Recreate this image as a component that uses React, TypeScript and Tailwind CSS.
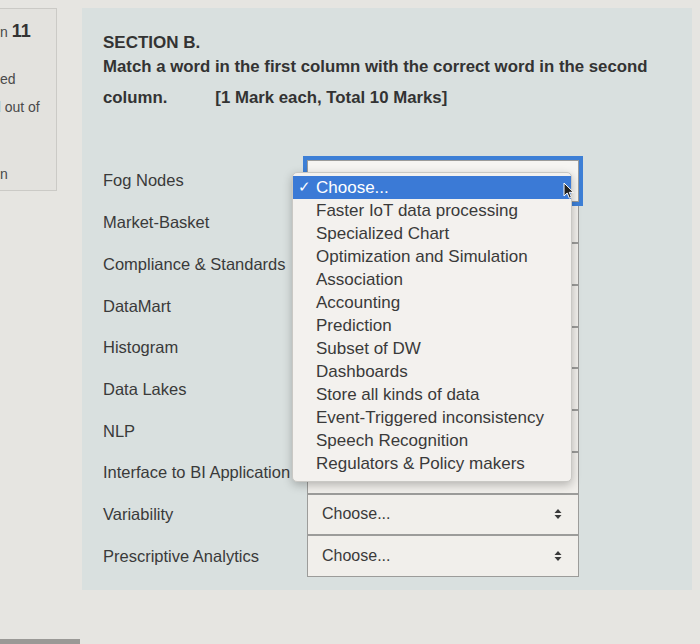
import React from 'react';

const rows = [
  'Fog Nodes',
  'Market-Basket',
  'Compliance & Standards',
  'DataMart',
  'Histogram',
  'Data Lakes',
  'NLP',
  'Interface to BI Application',
  'Variability',
  'Prescriptive Analytics',
];

const options = [
  'Faster IoT data processing',
  'Specialized Chart',
  'Optimization and Simulation',
  'Association',
  'Accounting',
  'Prediction',
  'Subset of DW',
  'Dashboards',
  'Store all kinds of data',
  'Event-Triggered inconsistency',
  'Speech Recognition',
  'Regulators & Policy makers',
];

const SelectArrows: React.FC = () => (
  <svg width="8" height="12" viewBox="0 0 8 12" className="text-[#3a3a3a]">
    <path d="M4 1 L7.5 5 H0.5 Z" fill="currentColor" />
    <path d="M4 11 L7.5 7 H0.5 Z" fill="currentColor" />
  </svg>
);

const App: React.FC = () => {
  return (
    <div className="relative w-[700px] h-[644px] overflow-hidden bg-[#e6e5e1] font-['Liberation_Sans',Arial,sans-serif] text-[#3a3a3a]">
      <div className="flex pt-2">
        {/* Question info block, cut off on the left */}
        <div className="w-[57px] h-[183px] shrink-0 border border-l-0 border-[#cbcac6] bg-[#e3e2de] overflow-hidden text-[14px] text-[#4a4a4a]">
          <div className="flex items-baseline mt-[9px] whitespace-nowrap">
            <span>n</span>
            <span className="ml-[4px] text-[18px] font-bold text-[#333]">11</span>
          </div>
          <p className="mt-[26px] leading-[16px]">ed</p>
          <p className="mt-[12px] leading-[16px] -ml-[7px] whitespace-nowrap">d out of</p>
          <p className="mt-[51px] leading-[16px]">n</p>
        </div>

        {/* Question text panel */}
        <div className="ml-[25px] w-[610px] h-[582px] shrink-0 bg-[#d9e0df] pl-[21px] pt-[27px]">
          <h3 className="text-[17px] leading-[16px] font-bold text-[#333]">SECTION B.</h3>
          <p className="text-[16.8px] leading-[31px] font-bold text-[#333] whitespace-nowrap">
            Match a word in the first column with the correct word in the second
            <br />
            column.<span className="ml-[48px]">[1 Mark each, Total 10 Marks]</span>
          </p>

          <div className="mt-[47px] flex flex-col">
            {rows.map((label, i) => (
              <div key={label} className="flex items-center h-[41.7px]">
                <span className="w-[204px] shrink-0 text-[16.5px] whitespace-nowrap">{label}</span>
                <div
                  className={`w-[272px] h-full flex items-center justify-between pl-[14px] pr-[16px] border border-[#9c9c9a] bg-[#f1efeb] text-[16px] ${
                    i === 0 ? 'ring-4 ring-[#3d7fd6] relative z-10 bg-[#f6f5f2]' : ''
                  }`}
                >
                  <span>Choose...</span>
                  <SelectArrows />
                </div>
              </div>
            ))}
          </div>
        </div>
      </div>

      {/* Open dropdown list */}
      <div className="absolute left-[292px] top-[172px] w-[280px] h-[310px] z-20 rounded-[5px] border border-[#c9c8c4] bg-[#f3f1ee] pt-[3px] shadow-[0_3px_10px_rgba(0,0,0,0.25)] text-[17px] text-[#3a3a3a]">
        <div className="flex items-center h-[23px] bg-[#3b7ad6] text-white">
          <span className="w-[23px] pl-[5px] text-[15px]">✓</span>
          <span>Choose...</span>
        </div>
        {options.map((o) => (
          <div key={o} className="flex items-center h-[23px] pl-[23px] whitespace-nowrap">
            {o}
          </div>
        ))}
      </div>

      {/* Mouse pointer */}
      <svg
        className="absolute left-[563px] top-[182px] z-30"
        width="12"
        height="18"
        viewBox="0 0 12 18"
      >
        <path d="M1 1 L1 14 L4.2 11 L6.4 16.2 L8.4 15.3 L6.3 10.3 L10.5 10.3 Z" fill="#222" stroke="#fff" strokeWidth="1" />
      </svg>

      <div className="absolute left-0 bottom-0 w-[80px] h-[5px] bg-[#9a9996]" />
    </div>
  );
};

export default App;
